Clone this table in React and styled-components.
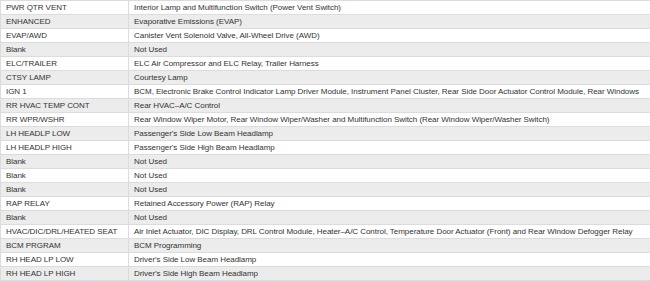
import styled, { createGlobalStyle } from "styled-components";

const GlobalStyle = createGlobalStyle`
  html, body {
    margin: 0;
    padding: 0;
    background: #ffffff;
    overflow: hidden;
  }
`;

const Table = styled.table`
  width: 660px;
  table-layout: fixed;
  border-collapse: collapse;
  font-family: "Liberation Sans", Arial, sans-serif;
  font-size: 8px;
  letter-spacing: -0.05px;
  color: #333333;
`;

const NameCol = styled.col`
  width: 128px;
`;

const Row = styled.tr`
  height: 14px;
  background-color: ${(p) => (p.$odd ? "#ececec" : "#ffffff")};
`;

const Cell = styled.td`
  border: 1px solid #dcdcdc;
  padding: 0 5px;
  height: 13px;
  line-height: 13px;
  white-space: nowrap;
  overflow: hidden;
  vertical-align: middle;
`;

const rows = [
  ["PWR QTR VENT", "Interior Lamp and Multifunction Switch (Power Vent Switch)"],
  ["ENHANCED", "Evaporative Emissions (EVAP)"],
  ["EVAP/AWD", "Canister Vent Solenoid Valve, All-Wheel Drive (AWD)"],
  ["Blank", "Not Used"],
  ["ELC/TRAILER", "ELC Air Compressor and ELC Relay, Trailer Harness"],
  ["CTSY LAMP", "Courtesy Lamp"],
  ["IGN 1", "BCM, Electronic Brake Control Indicator Lamp Driver Module, Instrument Panel Cluster, Rear Side Door Actuator Control Module, Rear Windows"],
  ["RR HVAC TEMP CONT", "Rear HVAC–A/C Control"],
  ["RR WPR/WSHR", "Rear Window Wiper Motor, Rear Window Wiper/Washer and Multifunction Switch (Rear Window Wiper/Washer Switch)"],
  ["LH HEADLP LOW", "Passenger's Side Low Beam Headlamp"],
  ["LH HEADLP HIGH", "Passenger's Side High Beam Headlamp"],
  ["Blank", "Not Used"],
  ["Blank", "Not Used"],
  ["Blank", "Not Used"],
  ["RAP RELAY", "Retained Accessory Power (RAP) Relay"],
  ["Blank", "Not Used"],
  ["HVAC/DIC/DRL/HEATED SEAT", "Air Inlet Actuator, DIC Display, DRL Control Module, Heater–A/C Control, Temperature Door Actuator (Front) and Rear Window Defogger Relay"],
  ["BCM PRGRAM", "BCM Programming"],
  ["RH HEAD LP LOW", "Driver's Side Low Beam Headlamp"],
  ["RH HEAD LP HIGH", "Driver's Side High Beam Headlamp"],
];

export default function App() {
  return (
    <>
      <GlobalStyle />
      <Table>
        <colgroup>
          <NameCol />
          <col />
        </colgroup>
        <tbody>
          {rows.map(([name, usage], i) => (
            <Row key={i} $odd={i % 2 === 1}>
              <Cell>{name}</Cell>
              <Cell>{usage}</Cell>
            </Row>
          ))}
        </tbody>
      </Table>
    </>
  );
}
